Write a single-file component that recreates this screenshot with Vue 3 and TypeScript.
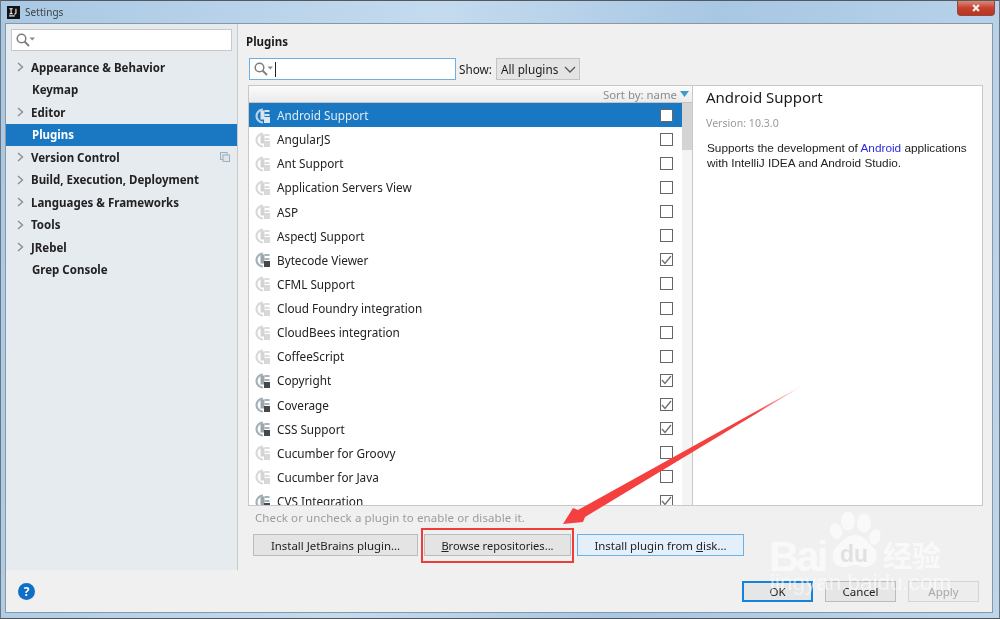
<script setup lang="ts">
const nav = [
  { label: 'Appearance & Behavior', arrow: true },
  { label: 'Keymap', arrow: false },
  { label: 'Editor', arrow: true },
  { label: 'Plugins', arrow: false, active: true },
  { label: 'Version Control', arrow: true, copy: true },
  { label: 'Build, Execution, Deployment', arrow: true },
  { label: 'Languages & Frameworks', arrow: true },
  { label: 'Tools', arrow: true },
  { label: 'JRebel', arrow: true },
  { label: 'Grep Console', arrow: false },
]
const plugins = [
  { name: 'Android Support', on: false },
  { name: 'AngularJS', on: false },
  { name: 'Ant Support', on: false },
  { name: 'Application Servers View', on: false },
  { name: 'ASP', on: false },
  { name: 'AspectJ Support', on: false },
  { name: 'Bytecode Viewer', on: true },
  { name: 'CFML Support', on: false },
  { name: 'Cloud Foundry integration', on: false },
  { name: 'CloudBees integration', on: false },
  { name: 'CoffeeScript', on: false },
  { name: 'Copyright', on: true },
  { name: 'Coverage', on: true },
  { name: 'CSS Support', on: true },
  { name: 'Cucumber for Groovy', on: false },
  { name: 'Cucumber for Java', on: false },
  { name: 'CVS Integration', on: true },
]
</script>

<template>
  <div class="screen">
    <header class="titlebar">
      <svg class="appicon" width="13" height="13" viewBox="0 0 16 16">
        <rect width="16" height="16" fill="#111" />
        <rect x="2.500" y="11.500" width="7" height="1.400" fill="#fff" />
        <path d="M3 3.500h4M5 3.500v6M3 9.500h4M11 3.500v5.500q0 1-2 1" stroke="#fff" stroke-width="1.300" fill="none" />
      </svg>
      <span class="wintitle">Settings</span>
      <div class="closebtn">
        <svg width="10" height="8" viewBox="0 0 13 11">
          <path d="M2.500 1.500l8 8M10.500 1.500l-8 8" stroke="#f2f0ee" stroke-width="3" />
        </svg>
      </div>
    </header>

    <div class="dialog">
      <div class="main">
        <aside class="sidebar">
          <div class="navsearch">
            <svg class="mag" width="20" height="14" viewBox="0 0 20 14">
              <circle cx="5.500" cy="5.500" r="4.300" fill="none" stroke="#7d7d7d" stroke-width="1.500" />
              <path d="M8.500 8.500l4.500 4.500" stroke="#7d7d7d" stroke-width="1.800" />
              <path d="M13.500 4.500h5.500l-2.700 3z" fill="#8a8a8a" />
            </svg>
          </div>
          <nav class="navlist">
            <div v-for="n in nav" :key="n.label" class="navitem" :class="{ active: n.active }">
              <svg v-if="n.arrow" class="chev" width="7" height="10" viewBox="0 0 7 10">
                <path d="M1 1l4.500 4L1 9" fill="none" stroke="#8b8f93" stroke-width="1.400" />
              </svg>
              <span class="navlabel" :class="{ indented: !n.arrow }">{{ n.label }}</span>
              <svg v-if="n.copy" class="copy" width="10" height="10" viewBox="0 0 10 10">
                <rect x="0.500" y="0.500" width="6.500" height="7" fill="#dfe5ea" stroke="#9fb0bc" />
                <rect x="3" y="3" width="6.500" height="6.500" fill="#dfe5ea" stroke="#9fb0bc" />
              </svg>
            </div>
          </nav>
        </aside>

        <section class="content">
          <h2 class="heading">Plugins</h2>
          <div class="toolbar">
            <div class="search">
              <svg class="mag" width="20" height="14" viewBox="0 0 20 14">
                <circle cx="5.500" cy="5.500" r="4.300" fill="none" stroke="#7d7d7d" stroke-width="1.500" />
                <path d="M8.500 8.500l4.500 4.500" stroke="#7d7d7d" stroke-width="1.800" />
                <path d="M13.500 4.500h5.500l-2.700 3z" fill="#8a8a8a" />
              </svg>
              <span class="caret"></span>
            </div>
            <span class="showlabel">Show:</span>
            <div class="select">
              <span>All plugins</span>
              <svg width="12" height="7" viewBox="0 0 12 7">
                <path d="M1 1l5 5 5-5" fill="none" stroke="#555" stroke-width="1.300" />
              </svg>
            </div>
          </div>

          <div class="panes">
            <div class="listpane">
              <div class="sorthead">
                <span>Sort by: name</span>
                <svg width="9" height="6" viewBox="0 0 9 6"><path d="M0 0h9L4.500 6z" fill="#3d9ad1" /></svg>
              </div>
              <div class="listbody">
                <div class="rows">
                  <div v-for="(p, i) in plugins" :key="p.name" class="row" :class="{ selected: i === 0 }">
                    <svg class="plug" width="18" height="17" viewBox="0 0 18 17">
                      <path d="M9 2.500A6.500 6.500 0 1 0 9 15.500" fill="none" :stroke="i === 0 ? '#b9d3e8' : p.on ? '#a6b0b7' : '#d9d9d9'" stroke-width="2.200" />
                      <path d="M6.500 3.500h4v9h-4z" :fill="i === 0 ? '#d5e4f0' : p.on ? '#9aa5ad' : '#d4d4d4'" />
                      <path d="M10.500 3h5v2h-5zM10.500 7h5v2h-5z" :fill="i === 0 ? '#d5e4f0' : p.on ? '#a8b2b9' : '#dcdcdc'" />
                      <rect x="10" y="10" width="6" height="6" :fill="i === 0 ? '#dbe7f1' : p.on ? '#44484c' : '#d8d8d8'" />
                    </svg>
                    <span class="pname">{{ p.name }}</span>
                    <span class="check">
                      <svg v-if="p.on" width="11" height="10" viewBox="0 0 11 10">
                        <path d="M1 5l3 3.500L10 1" fill="none" stroke="#6e6e6e" stroke-width="1.300" />
                      </svg>
                    </span>
                  </div>
                </div>
                <div class="scrolltrack"><div class="scrollthumb"></div></div>
              </div>
            </div>
            <div class="details">
              <div class="dtitle">Android Support</div>
              <div class="dversion">Version: 10.3.0</div>
              <p class="dtext">Supports the development of <span class="dlink">Android</span> applications<br />with IntelliJ IDEA and Android Studio.</p>
            </div>
          </div>

          <div class="hint">Check or uncheck a plugin to enable or disable it.</div>
          <div class="actions">
            <button class="btn b1">Install <u>J</u>etBrains plugin...</button>
            <button class="btn b2"><u>B</u>rowse repositories...</button>
            <button class="btn b3 hot">Install plugin from <u>d</u>isk...</button>
          </div>
        </section>
      </div>

      <footer class="footer">
        <span class="help">?</span>
        <div class="footbtns">
          <button class="fbtn ok">OK</button>
          <button class="fbtn">Cancel</button>
          <button class="fbtn apply">Apply</button>
        </div>
      </footer>
    </div>

    <div class="redbox"></div>
    <svg class="arrow" width="1000" height="619" viewBox="0 0 1000 619">
      <defs>
        <linearGradient id="arrowfade" gradientUnits="userSpaceOnUse" x1="807" y1="383" x2="755" y2="414">
          <stop offset="0" stop-color="#f4403f" stop-opacity="0" />
          <stop offset="1" stop-color="#f4403f" />
        </linearGradient>
      </defs>
      <path d="M807 383L585 517L583 522L563 524L573 508L578 510Z" fill="url(#arrowfade)" />
    </svg>

    <div class="watermark">
      <svg class="paw" width="60" height="62" viewBox="0 0 60 62">
        <g fill="#fff" fill-opacity=".6">
          <ellipse cx="11" cy="20" rx="6" ry="8" transform="rotate(-15 11 20)" />
          <ellipse cx="23" cy="10" rx="7" ry="9.500" />
          <ellipse cx="39" cy="12" rx="7" ry="9.500" />
          <ellipse cx="50" cy="26" rx="5.500" ry="8" transform="rotate(15 50 26)" />
          <path d="M30 24c9 0 12 7 18 12 8 7 3 20-8 20-4 0-6-2-10-2s-7 2-11 2c-11 0-15-12-8-20 6-5 10-12 19-12z" />
        </g>
      </svg>
      <span class="wm-bai">Bai</span>
      <span class="wm-du">du</span>
      <span class="wm-cn">经验</span>
      <span class="wm-url">jingyan.baidu.com</span>
    </div>
  </div>
</template>

<style scoped>
.screen {
  position: relative;
  width: 1000px;
  height: 619px;
  overflow: hidden;
  display: flex;
  flex-direction: column;
  box-sizing: border-box;
  padding: 0 6px 5px;
  background: linear-gradient(100deg, #a9c8e4 0%, #c4dbef 40%, #a8c7e3 65%, #bdd6ec 100%);
  border-top: 1px solid #55595e;
  border-left: 1px solid #6b7680;
  border-right: 1px solid #6b7680;
  border-bottom: 1px solid #50565c;
  font-family: "Noto Sans", "Open Sans", sans-serif;
  color: #1c1c1c;
  filter: blur(0.35px);
}
.titlebar {
  height: 22px;
  flex: none;
  display: flex;
  align-items: center;
}
.appicon { flex: none; }
.wintitle {
  margin-left: 5px;
  font-size: 10px;
  letter-spacing: 0.050px;
  color: #3a4248;
}
.closebtn {
  align-self: flex-start;
  margin-left: auto;
  margin-right: -2px;
  width: 38px;
  height: 15px;
  box-sizing: border-box;
  background: linear-gradient(#d98a78, #c8402e 50%, #b73523);
  border-radius: 0 0 4px 4px;
  border: 1px solid #8e4a3e;
  border-top: none;
  display: flex;
  align-items: center;
  justify-content: center;
}
.dialog {
  flex: 1;
  min-height: 0;
  display: flex;
  flex-direction: column;
  background: #f0f0f0;
  border: 1px solid #8b98a4;
  margin-left: -2px;
}
.main { flex: 1; min-height: 0; display: flex; }
.sidebar {
  width: 231px;
  flex: none;
  background: #e6ebf0;
  border-right: 1px solid #c9c9c9;
  padding-top: 5px;
  box-sizing: content-box;
}
.navsearch {
  margin: 0 5px;
  height: 20px;
  background: #fff;
  border: 1px solid #c8c8c8;
  display: flex;
  align-items: center;
  padding-left: 4px;
}
.navlist { margin-top: 5px; }
.navitem {
  height: 22.500px;
  display: flex;
  align-items: center;
  padding-left: 11px;
  font-size: 11.500px;
  font-weight: 700;
  color: #222;
  position: relative;
}
.navitem.active {
  background: #1a78c2;
  color: #fff;
}
.chev { margin-right: 7px; flex: none; }
.navlabel.indented { margin-left: 15px; }
.copy { margin-left: auto; margin-right: 7px; }
.content {
  flex: 1;
  min-width: 0;
  padding: 0 9px 0 10px;
  display: flex;
  flex-direction: column;
}
.heading {
  margin: 9px 0 0 -2px;
  height: 18px;
  font-size: 11.500px;
  line-height: 18px;
  font-weight: 700;
}
.toolbar {
  margin-top: 7px;
  height: 22px;
  display: flex;
  align-items: center;
  padding-left: 1px;
}
.search {
  width: 207px;
  height: 22px;
  box-sizing: border-box;
  background: #fff;
  border: 1px solid #6fb0e2;
  display: flex;
  align-items: center;
  padding-left: 4px;
}
.caret {
  width: 1px;
  height: 15px;
  background: #222;
  margin-left: 1px;
}
.showlabel { margin-left: 3px; font-size: 11.750px; width: 33px; flex: none; }
.select {
  margin-left: 4px;
  width: 84px;
  height: 22px;
  box-sizing: border-box;
  background: #e4e4e4;
  border: 1px solid #c4c4c4;
  display: flex;
  align-items: center;
  justify-content: space-between;
  padding: 0 3px 0 4px;
  font-size: 11.750px;
}
.panes {
  margin-top: 5px;
  height: 421px;
  flex: none;
  display: flex;
  background: #fff;
  border: 1px solid #c8c8c8;
  box-sizing: border-box;
}
.listpane {
  width: 443px;
  flex: none;
  border-right: 1px solid #c8c8c8;
  display: flex;
  flex-direction: column;
  min-height: 0;
}
.sorthead {
  height: 17px;
  flex: none;
  box-sizing: border-box;
  background: linear-gradient(#fbfbfb, #ebebeb);
  border-bottom: 1px solid #c4c4c4;
  display: flex;
  align-items: center;
  justify-content: flex-end;
  gap: 3px;
  padding-right: 3px;
  font-size: 11.400px;
  color: #8c8c8c;
}
.listbody { flex: 1; min-height: 0; display: flex; overflow: hidden; }
.rows { flex: 1; min-width: 0; }
.row {
  height: 24.125px;
  display: flex;
  align-items: center;
  padding-left: 5px;
  font-size: 11.750px;
  color: #222;
}
.row.selected { background: #1a78c2; color: #dcebf6; }
.plug { flex: none; }
.pname { margin-left: 5px; }
.check {
  margin-left: auto;
  margin-right: 9px;
  width: 13px;
  height: 13px;
  box-sizing: border-box;
  border: 1px solid #666;
  background: #fff;
  display: flex;
  align-items: center;
  justify-content: center;
  flex: none;
}
.selected .check { border-radius: 1px; }
.scrolltrack { width: 10px; background: #f4f4f4; flex: none; }
.scrollthumb { height: 47px; background: #d4d4d4; }
.details { flex: 1; min-width: 0; padding: 0 13px; }
.dtitle {
  margin-top: 1px;
  font-size: 15px;
  line-height: 20px;
  color: #1a1a1a;
}
.dversion {
  margin-top: 9px;
  font-size: 10.600px;
  line-height: 14px;
  color: #9a9a9a;
}
.dtext {
  margin: 11px 0 0 1px;
  font-family: "Liberation Sans", Arial, sans-serif;
  font-size: 11.800px;
  line-height: 14.500px;
  white-space: nowrap;
  color: #222;
}
.dlink { color: #2a2ae0; }
.hint {
  margin-top: 4px;
  padding-left: 7px;
  font-size: 11.500px;
  line-height: 15px;
  color: #9b9b9b;
  letter-spacing: 0.100px;
}
.actions {
  margin-top: 9px;
  display: flex;
  padding-left: 5px;
}
.btn {
  height: 22px;
  box-sizing: border-box;
  background: #e4e4e4;
  border: 1px solid #bcbcbc;
  padding: 0;
  font: inherit;
  font-size: 11.400px;
  color: #222;
}
.b1 { width: 165px; }
.b2 { width: 147px; margin-left: 6px; font-size: 11.100px; }
.b3 { width: 167px; margin-left: 6px; }
.hot { background: #e3f0fb; border-color: #6fb0e2; }
.footer {
  height: 42px;
  flex: none;
  display: flex;
  align-items: center;
  padding-left: 12px;
}
.help {
  width: 17px;
  height: 17px;
  border-radius: 50%;
  background: #0f6fc6;
  color: #fff;
  font-size: 12px;
  font-weight: 700;
  display: flex;
  align-items: center;
  justify-content: center;
}
.footbtns { margin-left: auto; display: flex; gap: 12px; margin-right: 13px; }
.fbtn {
  width: 71px;
  height: 21px;
  box-sizing: border-box;
  background: #e6e6e6;
  border: 1px solid #bcbcbc;
  padding: 0;
  font: inherit;
  font-size: 11.500px;
  color: #222;
}
.ok { border: 2px solid #1583dc; }
.apply { background: #ededed; border-color: #d4d4d4; color: #a8a8a8; }
.redbox {
  position: absolute;
  left: 420px;
  top: 527px;
  width: 153px;
  height: 35px;
  box-sizing: border-box;
  border: 2px solid #ee3b3b;
}
.arrow { position: absolute; left: -1px; top: -1px; pointer-events: none; }
.watermark {
  position: absolute;
  left: 760px;
  top: 510px;
  width: 239px;
  height: 100px;
  pointer-events: none;
  color: rgba(255, 255, 255, 0.6);
  font-family: "Liberation Sans", sans-serif;
}
.paw { position: absolute; left: 64px; top: 0; }
.wm-bai, .wm-du, .wm-cn, .wm-url { position: absolute; white-space: nowrap; }
.wm-bai { left: 8px; top: 24px; font-size: 42px; font-weight: 700; line-height: 44px; letter-spacing: -3px; }
.wm-du { left: 79px; top: 31px; font-size: 23px; font-weight: 700; line-height: 24px; color: rgba(205, 205, 205, 0.55); }
.wm-cn {
  left: 122px;
  top: 25px;
  font-family: "Noto Sans CJK SC", sans-serif;
  font-size: 29px;
  font-weight: 700;
  line-height: 36px;
}
.wm-url { left: 9px; top: 59px; font-size: 22.500px; line-height: 26px; color: rgba(255,255,255,.55); }
</style>
